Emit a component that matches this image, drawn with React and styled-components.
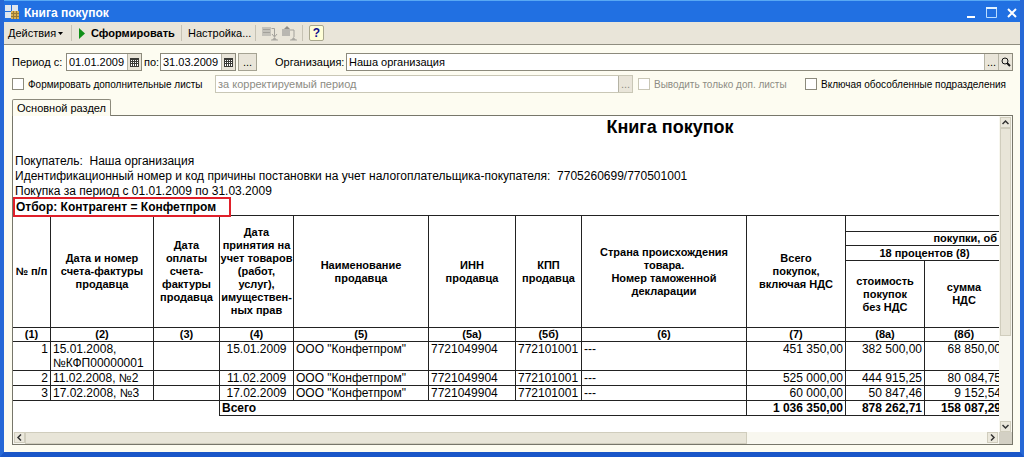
import React, { useState } from "react";
import styled, { createGlobalStyle } from "styled-components";

const GlobalStyle = createGlobalStyle`
    * {
        box-sizing: border-box;
    }
    body {
        margin: 0;
    }
    body, button, input {
        font-family: "Liberation Sans", Arial, sans-serif;
        font-size: 11px;
        color: #000;
    }
    button {
        padding: 0;
        border: 0;
        background: none;
    }
    svg {
        flex: none;
    }
`;

const Window = styled.div`
    display: flex;
    flex-direction: column;
    min-height: 100vh;
    border: solid #2668d6;
    border-width: 0 4px 5px;
    border-bottom-color: #1a56c8;
    background: #fdfcf1;
`;

const TitleBar = styled.header`
    display: flex;
    align-items: center;
    height: 22px;
    padding: 2px 0 0 1px;
    border-top: 1px solid #58a8f4;
    background: #2170e2;
    color: #fff;
`;

const Title = styled.h1`
    flex: 1;
    margin: 0 0 0 4px;
    font-size: 12px;
    font-weight: bold;
`;

const WindowButtons = styled.div`
    display: flex;
    gap: 8px;
    padding-right: 2px;

    button {
        display: flex;
        width: 12px;
        height: 12px;
    }
`;

const Toolbar = styled.div`
    display: flex;
    align-items: center;
    height: 23px;
    padding-left: 4px;
    border-bottom: 1px solid #8f8d80;
    background: #e9e5d9;
`;

const ToolButton = styled.button`
    display: flex;
    align-items: center;
    gap: ${(props) => props.$gap || 2}px;
    width: ${(props) => props.$width}px;
    height: 20px;
    font-weight: ${(props) => (props.$bold ? "bold" : "normal")};
    white-space: nowrap;
`;

const Separator = styled.span`
    width: 1px;
    height: 16px;
    margin: 0 6px;
    background: #c6c2b4;
`;

const HelpButton = styled.button`
    width: 15px;
    height: 16px;
    border: 1px solid #a9a78e;
    border-radius: 2px;
    background: #ffffd8;
    color: #10108c;
    font-size: 12px;
    font-weight: bold;
    line-height: 14px;
`;

const Form = styled.form`
    display: flex;
    flex-direction: column;
    gap: 4px;
    padding: 8px 7px 6px 8px;
`;

const FormRow = styled.div`
    display: flex;
    align-items: center;
    height: 18px;
`;

const Label = styled.label`
    flex: none;
    width: ${(props) => props.$width}px;
    padding-left: ${(props) => props.$indent || 0}px;
    white-space: nowrap;
`;

const Field = styled.div`
    display: flex;
    flex: ${(props) => (props.$width ? "none" : 1)};
    width: ${(props) => (props.$width ? props.$width + "px" : "auto")};
    min-width: 0;
    height: 18px;
    border: 1px solid ${(props) => (props.$disabled ? "#c9c7b6" : "#8c8a7c")};
    background: #fff;

    input {
        flex: 1;
        min-width: 0;
        padding: 0 2px;
        border: 0;
        background: transparent;
        color: ${(props) => (props.$disabled ? "#8d8c84" : "#000")};
    }
`;

const FieldButton = styled.button`
    display: flex;
    flex: none;
    align-items: center;
    justify-content: center;
    width: 14px;
    border-left: 1px solid #b5b3a4;
    background: #e9e5d9;
    color: inherit;

    &:disabled {
        color: #8d8c84;
    }
`;

const PeriodButton = styled.button`
    width: 19px;
    height: 18px;
    margin: 0 18px 0 2px;
    border: 1px solid #a5a393;
    background: #e9e5d9;
`;

const CheckGroup = styled.div`
    display: flex;
    margin-left: 5px;
`;

const Check = styled.label`
    display: flex;
    flex: none;
    align-items: center;
    gap: 4px;
    width: ${(props) => props.$width}px;
    color: ${(props) => (props.$disabled ? "#8d8c84" : "#000")};
    font-size: 10px;
    white-space: nowrap;

    input {
        appearance: none;
        flex: none;
        width: 12px;
        height: 12px;
        margin: 0;
        border: 1px solid ${(props) => (props.$disabled ? "#c9c7b6" : "#8c8a7c")};
        background: #fff;
    }

    input:checked {
        box-shadow: inset 0 0 0 2px #fff;
        background: #333;
    }
`;

const Tabs = styled.div`
    display: flex;
    padding-left: 8px;
`;

const Tab = styled.button`
    z-index: 1;
    height: 17px;
    margin-bottom: -1px;
    padding: 0 4px;
    border: 1px solid #8c8a7c;
    border-bottom: 0;
    border-radius: 2px 2px 0 0;
    background: #fdfcf1;
`;

const Panel = styled.main`
    display: grid;
    flex: 1;
    grid-template-columns: minmax(0, 1fr) 13px;
    grid-template-rows: 1fr 12px;
    margin: 0 7px 7px 8px;
    border: 1px solid #77766a;
    background: #fff;
`;

const Sheet = styled.div`
    overflow: hidden;
    font-size: 12px;
`;

const SheetTitle = styled.h2`
    width: 1314px;
    margin: 0 0 16px;
    font-size: 18px;
    line-height: 22px;
    text-align: center;
`;

const SheetLine = styled.p`
    margin: 0;
    padding-left: 2px;
    line-height: 15px;
    white-space: pre;
`;

const Filter = styled.div`
    position: relative;
    width: 218px;
    height: 20px;
    margin: -2px 0 -2px;
    padding-left: 1px;
    border: 2px solid #e0202a;
    background: #fff;
    font-weight: bold;
    line-height: 17px;
    white-space: nowrap;
`;

const Table = styled.table`
    width: 991px;
    margin-left: -1px;
    border-collapse: collapse;
    table-layout: fixed;

    th,
    td {
        padding: 0 2px;
        border: 1px solid #222;
    }

    th {
        padding: 0;
        font-size: 11px;
        line-height: 13px;
    }

    td {
        height: 15px;
        line-height: 14px;
        vertical-align: top;
        white-space: nowrap;
    }
`;

const Cell = styled.td`
    text-align: ${(props) => props.$align || "left"};
    font-weight: ${(props) => (props.$bold ? "bold" : "normal")};
`;

const HeadRow = styled.tr`
    height: ${(props) => props.$height}px;
`;

const GroupHead = styled.th`
    && {
        padding-right: 6px;
        text-align: right;
    }
`;

const BlankCell = styled.td`
    && {
        border-bottom: 0;
        border-left: 0;
    }
`;

const ScrollBar = styled.div`
    display: flex;
    flex-direction: ${(props) => (props.$vertical ? "column" : "row")};
    padding: ${(props) => (props.$vertical ? "1px 1px 0" : "0 1px")};
    background: #f8f7ef;

    button {
        display: flex;
        flex: none;
        align-items: center;
        justify-content: center;
        width: 11px;
        height: 11px;
        border: 1px solid #d0cdbd;
        background: #ebe8dc;
    }
`;

const Track = styled.div`
    display: flex;
    flex: 1;
    flex-direction: ${(props) => (props.$vertical ? "column" : "row")};
`;

const Thumb = styled.div`
    flex: 0 0 ${(props) => props.$size};
    border: 1px solid #d0cdbd;
    background: #e8e5d8;
`;

const Corner = styled.div`
    background: #d3d0c4;
`;

const COLUMNS = [38, 103, 66, 74, 135, 87, 66, 165, 99, 79, 79];

const HEADERS = [
    ["№ п/п"],
    ["Дата и номер", "счета-фактуры", "продавца"],
    ["Дата", "оплаты", "счета-", "фактуры", "продавца"],
    [
        "Дата",
        "принятия на",
        "учет товаров",
        "(работ,",
        "услуг),",
        "имуществен-",
        "ных прав",
    ],
    ["Наименование", "продавца"],
    ["ИНН", "продавца"],
    ["КПП", "продавца"],
    ["Страна происхождения", "товара.", "Номер таможенной", "декларации"],
    ["Всего", "покупок,", "включая НДС"],
];

const NUMBERS = [
    "(1)",
    "(2)",
    "(3)",
    "(4)",
    "(5)",
    "(5а)",
    "(5б)",
    "(6)",
    "(7)",
    "(8а)",
    "(8б)",
];

const ROWS = [
    {
        invoice: ["15.01.2008,", "№КФП00000001"],
        date: "15.01.2009",
        sums: ["451 350,00", "382 500,00", "68 850,00"],
    },
    {
        invoice: ["11.02.2008, №2"],
        date: "11.02.2009",
        sums: ["525 000,00", "444 915,25", "80 084,75"],
    },
    {
        invoice: ["17.02.2008, №3"],
        date: "17.02.2009",
        sums: ["60 000,00", "50 847,46", "9 152,54"],
    },
];

const TOTALS = ["1 036 350,00", "878 262,71", "158 087,29"];

const Lines = ({ items }) =>
    items.map((item, i) => (
        <React.Fragment key={item}>
            {i > 0 && <br />}
            {item}
        </React.Fragment>
    ));

const AppIcon = () => (
    <svg width="15" height="15" viewBox="0 0 15 15">
        <path d="M0 0h6v6H0zM7 0h6v6H7zM0 7h6v6H0z" fill="#dfe6ee" />
        <path d="M6 6h8v8H6z" fill="#d8b257" />
        <path
            d="M6 8.5h8M6 11.5h8M8.5 6v8M11.5 6v8"
            stroke="#9a7a34"
            strokeWidth="1"
        />
    </svg>
);

const CalendarIcon = () => (
    <svg width="9" height="9" viewBox="0 0 9 9">
        <path d="M0 0h9v9H0z" fill="#3a3a36" />
        <path
            d="M1 2h1v1H1zM3 2h1v1H3zM5 2h1v1H5zM7 2h1v1H7zM1 4h1v1H1zM3 4h1v1H3zM5 4h1v1H5zM7 4h1v1H7zM1 6h1v2H1zM3 6h1v2H3zM5 6h1v2H5zM7 6h1v2H7z"
            fill="#fff"
        />
    </svg>
);

const SearchIcon = () => (
    <svg width="10" height="10" viewBox="0 0 10 10" fill="none" stroke="#111">
        <circle cx="4" cy="4" r="3" />
        <path d="M6 6l3 3" strokeWidth="2" />
    </svg>
);

const SheetIcon = ({ up }) => (
    <svg width="16" height="15" viewBox="0 0 16 15" fill="none">
        {up ? (
            <>
                <path d="M1 3h8v7H1z" fill="#b9b7b1" />
                <path d="M3 3l3-3 3 3z" fill="#8f8d88" />
                <path d="M9 4h4v7" stroke="#a3a19b" />
            </>
        ) : (
            <>
                <path d="M0 1h9v9H0z" fill="#c3c1ba" />
                <path
                    d="M1 3.5h7M1 6.5h7M9.5 2.5h3v8M10 8l2.5 3L15 8"
                    stroke="#a3a19b"
                />
            </>
        )}
        <path d="M10 14l2.5-3 2.5 3z" fill="#aaa8a2" />
        <path d="M9 14h7" stroke="#aaa8a2" />
    </svg>
);

const Chevron = ({ turn }) => (
    <svg width="7" height="7" viewBox="0 0 7 7">
        <path
            d="M0.5 5l3-3 3 3"
            transform={`rotate(${turn} 3.5 3.5)`}
            fill="none"
            stroke="#333"
            strokeWidth="1.5"
        />
    </svg>
);

export default function App() {
    const [from, setFrom] = useState("01.01.2009");
    const [to, setTo] = useState("31.03.2009");
    const [company, setCompany] = useState("Наша организация");

    return (
        <>
            <GlobalStyle />
            <Window>
                <TitleBar>
                    <AppIcon />
                    <Title>Книга покупок</Title>
                    <WindowButtons>
                        <button aria-label="Свернуть">
                            <svg width="12" height="12">
                                <path d="M1 9h8v2H1z" fill="#fff" />
                            </svg>
                        </button>
                        <button aria-label="Развернуть">
                            <svg width="12" height="12">
                                <path
                                    d="M0.5 1v9.5h10V1"
                                    fill="none"
                                    stroke="#b9dcff"
                                />
                                <path d="M0 0h11v2H0z" fill="#e2f2ff" />
                            </svg>
                        </button>
                        <button aria-label="Закрыть">
                            <svg width="12" height="12">
                                <path
                                    d="M2 2l8 8M10 2l-8 8"
                                    stroke="#fff"
                                    strokeWidth="2"
                                />
                            </svg>
                        </button>
                    </WindowButtons>
                </TitleBar>

                <Toolbar>
                    <ToolButton $width={57}>
                        Действия
                        <svg width="5" height="3">
                            <path d="M0 0h5L2.5 3z" />
                        </svg>
                    </ToolButton>
                    <Separator />
                    <ToolButton $width={97} $gap={6} $bold>
                        <svg width="7" height="11">
                            <path d="M1 0l6 5.5L1 11z" fill="#109018" />
                        </svg>
                        Сформировать
                    </ToolButton>
                    <Separator />
                    <ToolButton $width={61}>Настройка...</ToolButton>
                    <Separator />
                    <ToolButton $width={19} aria-label="Развернуть группы">
                        <SheetIcon />
                    </ToolButton>
                    <ToolButton $width={15} aria-label="Свернуть группы">
                        <SheetIcon up />
                    </ToolButton>
                    <Separator />
                    <HelpButton>?</HelpButton>
                </Toolbar>

                <Form onSubmit={(e) => e.preventDefault()}>
                    <FormRow>
                        <Label $width={54} htmlFor="from">
                            Период с:
                        </Label>
                        <Field $width={76}>
                            <input
                                id="from"
                                value={from}
                                onChange={(e) => setFrom(e.target.value)}
                            />
                            <FieldButton aria-label="Календарь">
                                <CalendarIcon />
                            </FieldButton>
                        </Field>
                        <Label $width={18} $indent={2} htmlFor="to">
                            по:
                        </Label>
                        <Field $width={76}>
                            <input
                                id="to"
                                value={to}
                                onChange={(e) => setTo(e.target.value)}
                            />
                            <FieldButton aria-label="Календарь">
                                <CalendarIcon />
                            </FieldButton>
                        </Field>
                        <PeriodButton>...</PeriodButton>
                        <Label $width={71} htmlFor="company">
                            Организация:
                        </Label>
                        <Field>
                            <input
                                id="company"
                                value={company}
                                onChange={(e) => setCompany(e.target.value)}
                            />
                            <FieldButton>...</FieldButton>
                            <FieldButton aria-label="Открыть">
                                <SearchIcon />
                            </FieldButton>
                        </Field>
                    </FormRow>
                    <FormRow>
                        <Check $width={203}>
                            <input type="checkbox" />
                            Формировать дополнительные листы
                        </Check>
                        <Field $disabled>
                            <input
                                aria-label="Период дополнительных листов"
                                value="за корректируемый период"
                                disabled
                                readOnly
                            />
                            <FieldButton disabled>...</FieldButton>
                        </Field>
                        <CheckGroup>
                            <Check $width={167} $disabled>
                                <input type="checkbox" disabled />
                                Выводить только доп. листы
                            </Check>
                            <Check $width={208}>
                                <input type="checkbox" />
                                Включая обособленные подразделения
                            </Check>
                        </CheckGroup>
                    </FormRow>
                </Form>

                <Tabs>
                    <Tab>Основной раздел</Tab>
                </Tabs>
                <Panel>
                    <Sheet>
                        <SheetTitle>Книга покупок</SheetTitle>
                        <SheetLine>{"Покупатель:  Наша организация"}</SheetLine>
                        <SheetLine>
                            {
                                "Идентификационный номер и код причины постановки на учет налогоплательщика-покупателя:  7705260699/770501001"
                            }
                        </SheetLine>
                        <SheetLine>
                            Покупка за период с 01.01.2009 по 31.03.2009
                        </SheetLine>
                        <Filter>Отбор: Контрагент = Конфетпром</Filter>
                        <Table>
                            <colgroup>
                                {COLUMNS.map((width, i) => (
                                    <col key={i} width={width} />
                                ))}
                            </colgroup>
                            <thead>
                                <HeadRow $height={16}>
                                    {HEADERS.map((lines, i) => (
                                        <th key={i} rowSpan={4}>
                                            <Lines items={lines} />
                                        </th>
                                    ))}
                                    <th colSpan={2} />
                                </HeadRow>
                                <HeadRow $height={14}>
                                    <GroupHead colSpan={2}>
                                        покупки, об
                                    </GroupHead>
                                </HeadRow>
                                <HeadRow $height={15}>
                                    <th colSpan={2}>18 процентов (8)</th>
                                </HeadRow>
                                <HeadRow $height={67}>
                                    <th>
                                        <Lines
                                            items={[
                                                "стоимость",
                                                "покупок",
                                                "без НДС",
                                            ]}
                                        />
                                    </th>
                                    <th>
                                        <Lines items={["сумма", "НДС"]} />
                                    </th>
                                </HeadRow>
                                <HeadRow $height={14}>
                                    {NUMBERS.map((number) => (
                                        <th key={number}>{number}</th>
                                    ))}
                                </HeadRow>
                            </thead>
                            <tbody>
                                {ROWS.map((row, i) => (
                                    <tr key={row.date}>
                                        <Cell $align="right">{i + 1}</Cell>
                                        <Cell>
                                            <Lines items={row.invoice} />
                                        </Cell>
                                        <Cell />
                                        <Cell $align="center">{row.date}</Cell>
                                        <Cell>ООО "Конфетпром"</Cell>
                                        <Cell>7721049904</Cell>
                                        <Cell>772101001</Cell>
                                        <Cell>---</Cell>
                                        {row.sums.map((sum) => (
                                            <Cell key={sum} $align="right">
                                                {sum}
                                            </Cell>
                                        ))}
                                    </tr>
                                ))}
                                <tr>
                                    <BlankCell colSpan={3} />
                                    <Cell colSpan={5} $bold>
                                        Всего
                                    </Cell>
                                    {TOTALS.map((sum) => (
                                        <Cell key={sum} $align="right" $bold>
                                            {sum}
                                        </Cell>
                                    ))}
                                </tr>
                            </tbody>
                        </Table>
                    </Sheet>
                    <ScrollBar $vertical>
                        <button aria-label="Вверх">
                            <Chevron turn={0} />
                        </button>
                        <Track $vertical>
                            <Thumb $size="71%" />
                        </Track>
                        <button aria-label="Вниз">
                            <Chevron turn={180} />
                        </button>
                    </ScrollBar>
                    <ScrollBar>
                        <button aria-label="Влево">
                            <Chevron turn={270} />
                        </button>
                        <Track>
                            <Thumb $size="75%" />
                        </Track>
                        <button aria-label="Вправо">
                            <Chevron turn={90} />
                        </button>
                    </ScrollBar>
                    <Corner />
                </Panel>
            </Window>
        </>
    );
}
